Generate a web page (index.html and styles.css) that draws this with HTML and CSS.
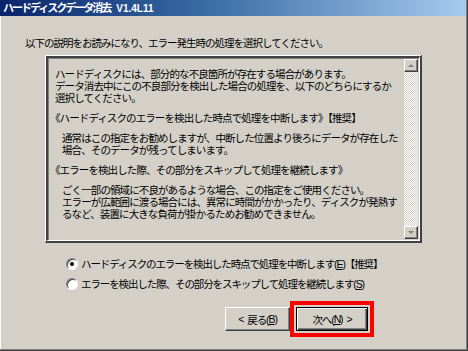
FILE: index.html
```html
<!DOCTYPE html>
<html lang="ja">
<head>
<meta charset="utf-8">
<title>ハードディスクデータ消去 V1.4L11</title>
<link rel="stylesheet" href="styles.css">
</head>
<body>
<div class="window">
  <div class="titlebar"><span class="title">ハードディスクデータ消去</span><span class="title version">V1.4L11</span></div>
  <p class="intro">以下の説明をお読みになり、エラー発生時の処理を選択してください。</p>
  <div class="box">
    <div class="field">
      <div class="text">
        <div class="para">
          <div class="line">ハードディスクには、部分的な不良箇所が存在する場合があります。</div>
          <div class="line">データ消去中にこの不良部分を検出した場合の処理を、以下のどちらにするか</div>
          <div class="line">選択してください。</div>
        </div>
        <div class="para head"><div class="line">《ハードディスクのエラーを検出した時点で処理を中断します》【推奨】</div></div>
        <div class="para indent">
          <div class="line">通常はこの指定をお勧めしますが、中断した位置より後ろにデータが存在した</div>
          <div class="line">場合、そのデータが残ってしまいます。</div>
        </div>
        <div class="para head"><div class="line">《エラーを検出した際、その部分をスキップして処理を継続します》</div></div>
        <div class="para indent">
          <div class="line">ごく一部の領域に不良があるような場合、この指定をご使用ください。</div>
          <div class="line">エラーが広範囲に渡る場合には、異常に時間がかかったり、ディスクが発熱す</div>
          <div class="line">るなど、装置に大きな負荷が掛かるためお勧めできません。</div>
        </div>
      </div>
      <div class="scrollbar">
        <div class="sb-btn"><span class="arrow up"></span></div>
        <div class="sb-track"></div>
        <div class="sb-btn"><span class="arrow down"></span></div>
      </div>
    </div>
  </div>
  <div class="options">
    <label class="radio"><span class="radio-circle checked"></span><span class="radio-label">ハードディスクのエラーを検出した時点で処理を中断します(<u>E</u>)【推奨】</span></label>
    <label class="radio"><span class="radio-circle"></span><span class="radio-label">エラーを検出した際、その部分をスキップして処理を継続します(<u>S</u>)</span></label>
  </div>
  <div class="buttons">
    <button class="btn back"><span class="chev">&lt;</span>戻る(<u>B</u>)</button>
    <div class="highlight">
      <button class="btn btn-default next">次へ(<u>N</u>)<span class="chev right">&gt;</span></button>
    </div>
  </div>
</div>
</body>
</html>
```

FILE: styles.css
```css
html, body {
  margin: 0;
  padding: 0;
}
body {
  width: 468px;
  height: 351px;
  background: #d4d0c8;
  font-family: "Liberation Sans", "Noto Sans CJK JP", sans-serif;
  font-size: 10.5px;
  letter-spacing: -1.1px;
  color: #000;
  overflow: hidden;
}
.window {
  box-sizing: border-box;
  width: 468px;
  height: 351px;
  background: #d4d0c8;
  box-shadow: inset -1px -1px #404040, inset -2px -2px #808080, inset 1px 0 #fff;
  display: flex;
  flex-direction: column;
}
.titlebar {
  height: 16px;
  background: linear-gradient(to right, #0a246a 0%, #3a6ea5 45%, #a6caf0 100%);
  display: flex;
  align-items: center;
  padding-left: 3px;
  margin-right: 2px;
}
.title {
  color: #fff;
  font-weight: bold;
  font-size: 11px;
  letter-spacing: -2px;
  line-height: 13px;
  white-space: nowrap;
}
.version {
  margin-left: 6px;
  letter-spacing: 0;
  font-size: 10px;
}
.intro {
  margin: 21px 0 0 25px;
  line-height: 12px;
  height: 12px;
  white-space: nowrap;
  letter-spacing: -1px;
}
.box {
  box-sizing: border-box;
  margin: 6px 0 0 45px;
  width: 377px;
  height: 188px;
  border-style: solid;
  border-width: 1px 2px 2px 1px;
  border-color: #fff #404040 #404040 #fff;
}
.field {
  box-sizing: border-box;
  height: 100%;
  display: flex;
  border-style: solid;
  border-width: 2px 1px 1px 2px;
  border-color: #404040 #fff #fff #404040;
  box-shadow: inset 1px 1px #808080;
}
.text {
  flex: 1;
  padding: 10px 0 0 7px;
  white-space: nowrap;
  overflow: hidden;
  letter-spacing: -0.9px;
}
.para {
  margin: 0 0 8px 0;
}
.line {
  height: 12px;
  line-height: 12px;
}
.head {
  margin-left: -5px;
}
.indent {
  padding-left: 7px;
}
.scrollbar {
  width: 14px;
  display: flex;
  flex-direction: column;
  padding: 1px 1px 1px 0;
}
.sb-btn {
  box-sizing: border-box;
  height: 13px;
  background: #d4d0c8;
  border-style: solid;
  border-width: 1px;
  border-color: #fff #404040 #404040 #fff;
  box-shadow: inset -1px -1px #808080;
  display: flex;
  align-items: center;
  justify-content: center;
}
.sb-track {
  flex: 1;
  background-color: #d4d0c8;
  background-image: conic-gradient(#fff 25%, #d4d0c8 0 50%, #fff 0 75%, #d4d0c8 0);
  background-size: 2px 2px;
}
.arrow {
  width: 0;
  height: 0;
  border-left: 3px solid transparent;
  border-right: 3px solid transparent;
}
.arrow.up {
  border-bottom: 3px solid #808080;
}
.arrow.down {
  border-top: 3px solid #808080;
}
.options {
  margin: 13px 0 0 66px;
  display: flex;
  flex-direction: column;
  gap: 4px;
}
.radio {
  display: flex;
  align-items: center;
  height: 16px;
  white-space: nowrap;
}
.radio-circle {
  box-sizing: border-box;
  width: 12px;
  height: 12px;
  border-radius: 50%;
  background: #fff;
  border: 1px solid;
  border-color: #808080 #fff #fff #808080;
  box-shadow: inset 1px 1px #404040;
  display: flex;
  align-items: center;
  justify-content: center;
  flex: none;
}
.radio-circle.checked::after {
  content: "";
  width: 4px;
  height: 4px;
  border-radius: 50%;
  background: #000;
}
.radio-label {
  margin-left: 3px;
  line-height: 12px;
}
.buttons {
  margin: 9px 0 0 225px;
  display: flex;
  align-items: center;
}
.btn {
  box-sizing: border-box;
  height: 24px;
  padding: 0;
  background: #d4d0c8;
  font: inherit;
  letter-spacing: inherit;
  color: #000;
  border-style: solid;
  border-width: 1px;
  border-color: #fff #404040 #404040 #fff;
  box-shadow: inset -1px -1px #808080;
  display: flex;
  align-items: center;
  justify-content: center;
  white-space: nowrap;
}
.chev {
  margin-right: 4px;
}
.chev.right {
  margin: 0 0 0 4px;
}
.back {
  width: 65px;
}
.highlight {
  border: 4px solid #f00;
  padding: 2px;
  display: flex;
}
.btn-default {
  width: 72px;
  border: 1px solid #000;
  box-shadow: inset 1px 1px #fff, inset -1px -1px #404040, inset -2px -2px #808080;
}
```
